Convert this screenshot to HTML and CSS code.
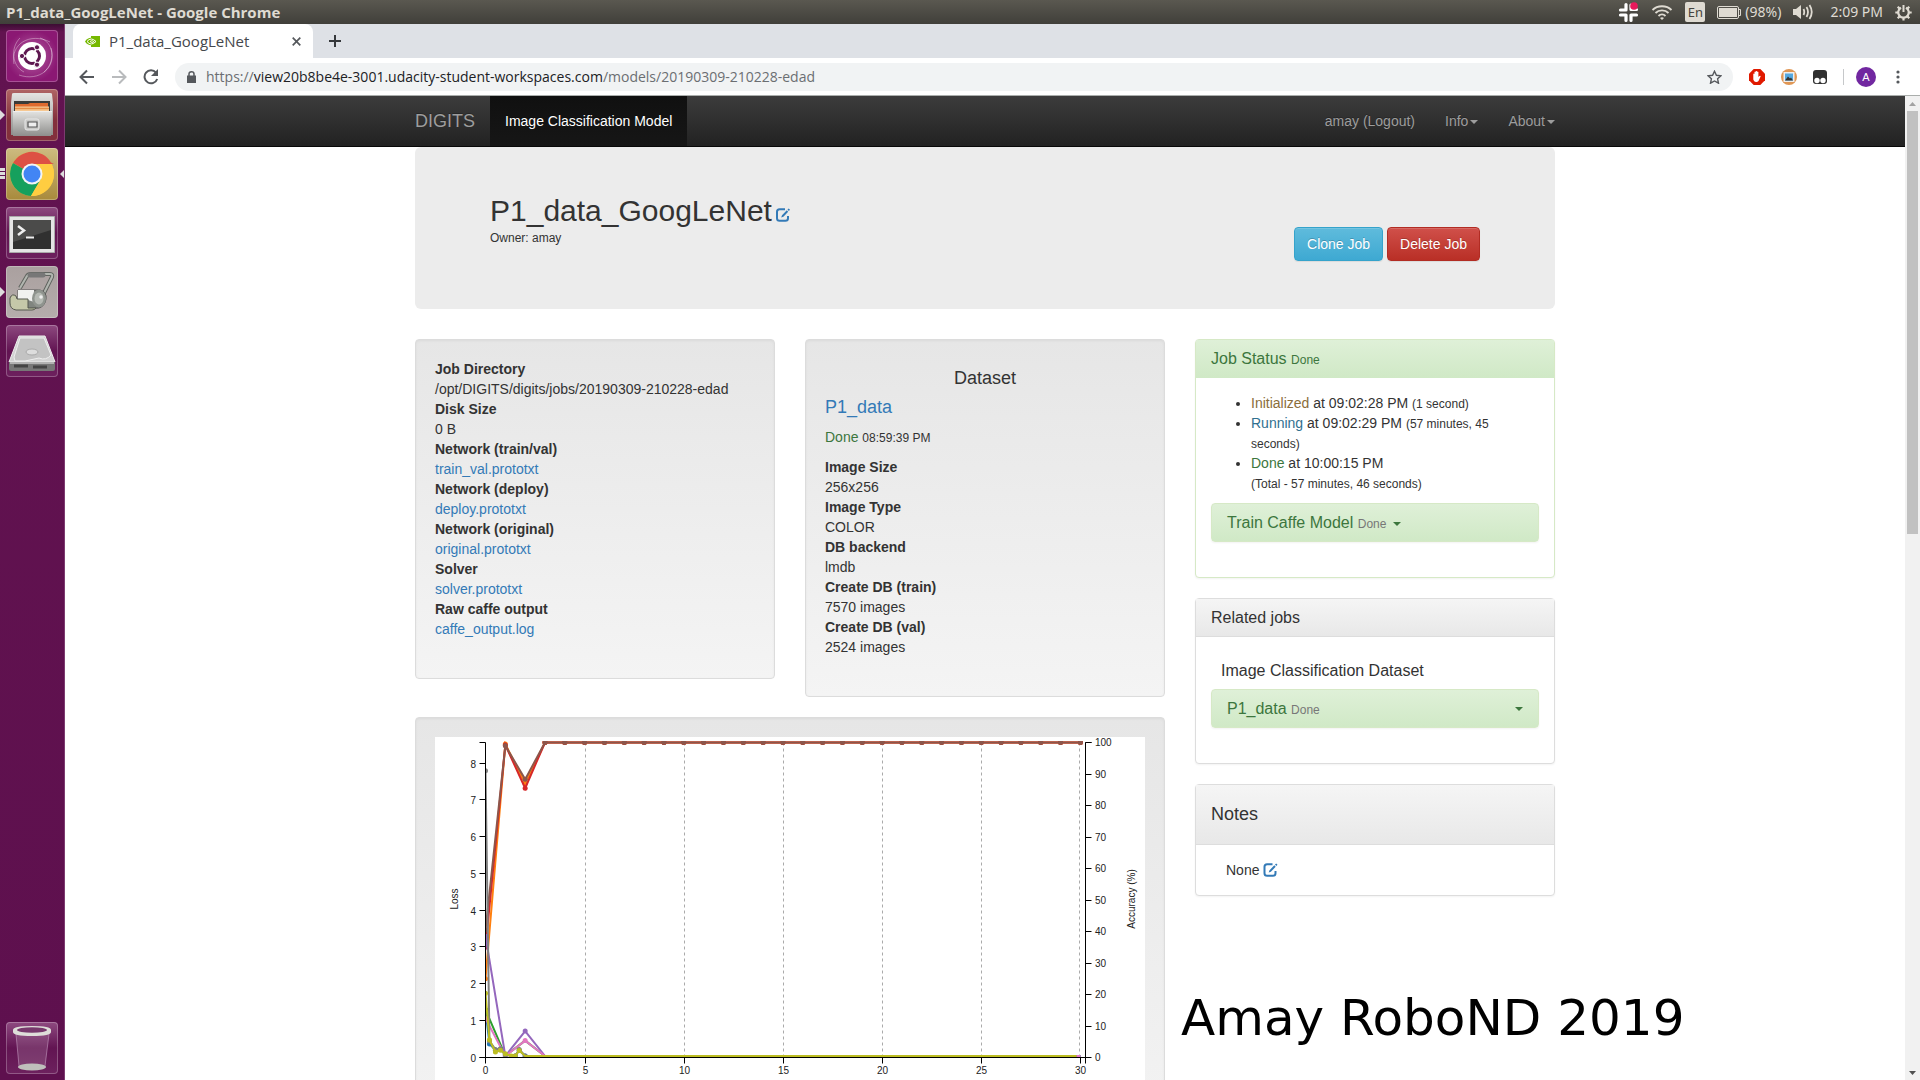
FILE: index.html
```html
<!DOCTYPE html>
<html lang="en">
<head>
<meta charset="utf-8">
<title>P1_data_GoogLeNet</title>
<link rel="stylesheet" href="styles.css">
</head>
<body>
<svg class="defs" width="0" height="0" aria-hidden="true">
  <symbol id="edit" viewBox="0 0 14 14">
    <path d="M9 1.2H3.6C2 1.200 1 2.200 1 3.800v6.400c0 1.600 1 2.600 2.600 2.600h5.800c1.600 0 2.600-1 2.600-2.600V8" fill="none" stroke="currentColor" stroke-width="2"/>
    <path d="M5.200 9.600 6 7.200 10.800 2.300 12.200 3.700 7.400 8.700zM11.500 1.600 12.700.4 14 1.700 12.800 2.900z" fill="currentColor"/>
  </symbol>
</svg>

<header class="menubar">
  <h1 class="window-title">P1_data_GoogLeNet - Google Chrome</h1>
  <div class="indicators">
    <svg width="21" height="21" viewBox="0 0 21 21"><g stroke="#fff" stroke-width="3.200" stroke-linecap="round"><path d="M8 2.500v5M2.500 8H8M13 7.500h5.500M13 7.500V3M2.500 13H8M8 13v5.500M13 18.500V13M13 13h5.500"/></g><path d="M10.500 0v21M0 10.500h21" stroke="#4a4843" stroke-width=".8"/><circle cx="16" cy="4" r="3.800" fill="#e8195b"/></svg>
    <svg width="22" height="16" viewBox="0 0 22 16"><g fill="none" stroke="#dfdbd2" stroke-width="1.800"><path d="M1.500 6c5-5 14-5 19 0M4.500 9c3.500-3.500 9.500-3.500 13 0M7.500 12c2-2 5-2 7 0"/></g><path d="m11 16-2-2q2-1.500 4 0z" fill="#dfdbd2"/></svg>
    <span class="keyboard">En</span>
    <span class="battery"><svg width="24" height="13" viewBox="0 0 24 13"><rect x=".5" y=".5" width="21" height="12" rx="1.500" fill="none" stroke="#dfdbd2"/><path d="M2 2h18v9H2z" fill="#dfdbd2"/><path d="M22 3.500h1.500v6H22" fill="none" stroke="#dfdbd2"/></svg>(98%)</span>
    <svg width="21" height="16" viewBox="0 0 21 16"><path d="M0 5h3l5-4v14l-5-4H0z" fill="#dfdbd2"/><path d="M10.500 5q1.500 3 0 6M13.500 3q3 5 0 10M16.500 1q4.500 7 0 14" fill="none" stroke="#dfdbd2" stroke-width="1.800"/></svg>
    <span class="clock">2:09 PM</span>
    <svg width="17" height="17" viewBox="0 0 17 17"><g fill="none" stroke="#dfdbd2"><path d="M6 3.700a5.300 5.300 0 1 0 5 0" stroke-width="2.200"/><path d="M8.500 1v7" stroke-width="2"/><path d="M.3 8.500h3M13.700 8.500h3M8.500 13.500v3M2.700 2.700l2.200 2.200M14.300 2.700l-2.200 2.200M2.700 14.300l2.200-2.200M14.300 14.300l-2.200-2.200" stroke-width="2.200"/></g></svg>
  </div>
</header>

<div class="desktop">
  <nav class="launcher" aria-label="Launcher">
    <button class="tile tile-dash" aria-label="Search your computer"><svg width="52" height="52" viewBox="0 0 52 52"><g fill="none" stroke="#fff" opacity=".35"><path d="M8 34C4 14 24 2 44 12M45 18c6 20-12 34-32 27M18 42C6 36 4 18 14 8M34 8c14 4 16 24 4 34"/></g><circle cx="26" cy="26" r="14" fill="#fff"/><circle cx="26" cy="26" r="7.500" fill="none" stroke="#5e1750" stroke-width="3"/><path d="M26 26H12M26 26l7-12M26 26l7 12" stroke="#fff" stroke-width="1.500"/><circle cx="26" cy="26" r="5.500" fill="#fff"/><g fill="#5e1750" stroke="#fff"><circle cx="16" cy="26" r="2.600"/><circle cx="31" cy="17.300" r="2.600"/><circle cx="31" cy="34.700" r="2.600"/></g></svg></button>
    <button class="tile tile-files running" aria-label="Files"><svg width="52" height="52" viewBox="0 0 52 52"><defs><linearGradient id="steel" x2="0" y2="1"><stop stop-color="#e4e4e2"/><stop offset="1" stop-color="#8e8e8c"/></linearGradient></defs><path d="M6 5q0-1 2-1h36q2 0 2 1l1 9v32H5V14z" fill="url(#steel)"/><path d="M8 12h36v11H8z" fill="#3b3b38"/><path d="M9 15h13l2-1h18v9H9z" fill="#df6a2e"/><path d="M9 17.500h34V23H9z" fill="#f6c892"/><path d="M9 19.500h34" stroke="#e58c45" stroke-width="1.500"/><path d="M7 22h39l-1 25H7z" fill="url(#steel)"/><path d="M7 22.500h39" stroke="#eee"/><rect x="19" y="30" width="14" height="11" rx="2" fill="#c8c8c6" stroke="#e8e8e8"/><path d="M22 33h9v5h-9z" fill="#eee" stroke="#555" stroke-width="1.200"/></svg></button>
    <button class="tile tile-chrome windows focused" aria-label="Google Chrome"><svg width="52" height="52" viewBox="0 0 52 52"><circle cx="26" cy="26" r="22" fill="#fbcb3b"/><path d="M26 26 7 15a22 22 0 0 1 38-.5L48 16H26z" fill="#dd5144"/><path d="M26 26 7 15a22 22 0 0 0 18 33l10-17z" fill="#16a05d"/><path d="M26 16h19.600A22 22 0 0 1 25 48l10-17z" fill="#ffcd41"/><circle cx="26" cy="26" r="10.500" fill="#f4f4f4"/><circle cx="26" cy="26" r="8.500" fill="#4285f4"/></svg></button>
    <button class="tile" aria-label="Terminal"><svg width="52" height="52" viewBox="0 0 52 52"><path d="M3.500 9.500h45v36h-45z" fill="#e5e5e5" stroke="#aaa"/><path d="M7 13h38v29H7z" fill="#303030"/><path d="M7 13h38v10L7 35z" fill="#4b4b4a"/><path d="m12 19 6 4.500-6 4.500" fill="none" stroke="#eee" stroke-width="2.500"/><path d="M20 30.500h8" stroke="#eee" stroke-width="2"/></svg></button>
    <button class="tile tile-scan running" aria-label="Scanner"><svg width="52" height="52" viewBox="0 0 52 52"><path d="M14 22 21 10q1-2 4-2h19q3 0 2 3L36 31" fill="none" stroke="#60645f" stroke-width="4"/><path d="M14 22 21 10q1-2 4-2h19q3 0 2 3L36 31" fill="none" stroke="#b2b6b0" stroke-width="2"/><path d="M24 9h13" stroke="#777" stroke-width="5" stroke-linecap="round"/><path d="M12 24h22q7 2 6 9t-7 9L12 43z" fill="#80857f" stroke="#555"/><path d="M12 24h16v12l-6-2-10-1z" fill="#f1f2f0"/><ellipse cx="33" cy="32.500" rx="7" ry="9" fill="#8f948e"/><ellipse cx="33" cy="32.500" rx="4.500" ry="6" fill="#b5b9b3"/><circle cx="35" cy="31" r="1.800" fill="#eee"/><path d="M4 32q2-5 6-2l1 3h11v9h8q-1 2-4 2H10q-6-1-6-7z" fill="#c5c8a9" stroke="#55584f"/></svg></button>
    <button class="tile" aria-label="Disk"><svg width="52" height="52" viewBox="0 0 52 52"><path d="M13 11h26l10 26H3z" fill="#d2d2d2" stroke="#eee"/><path d="M3 37h46v7q0 2-2 2H5q-2 0-2-2z" fill="#777"/><path d="M4 38h44" stroke="#eee"/><path d="M14 13h24l7 17q-5 6-12 3l-14 3H9L8 32z" fill="#c3c3c3" stroke="#eee"/><ellipse cx="26" cy="27" rx="6" ry="3" fill="#ddd" stroke="#aaa"/><path d="M8 41h14M27 42h14" stroke="#444" stroke-width="3"/></svg></button>
    <button class="tile tile-trash" aria-label="Trash"><svg width="52" height="52" viewBox="0 0 52 52"><path d="M10 11h33l-4 34q-13 4-26 0z" fill="#fff" opacity=".14"/><path d="m10 12 3 32M43 12l-4 32" stroke="#c49ac0" opacity=".6"/><ellipse cx="26" cy="45" rx="14" ry="3.500" fill="#bfbfbb"/><path d="M7 8q0-4 19-4t19 4v2q0 4-19 4T7 10z" fill="#deded9"/><ellipse cx="26" cy="8" rx="15" ry="2.800" fill="#77386c"/></svg></button>
  </nav>

  <div class="browser">
    <div class="tabstrip" role="tablist">
      <div class="tab" role="tab" aria-selected="true">
        <svg width="15" height="11" viewBox="0 0 15 11"><path d="M6 0h9v11H6z" fill="#76b900"/><path d="M0 5.500C3 .5 9 .5 13 5.500c-4 5-10 5-13 0z" fill="#76b900"/><path d="M2 5.500q4-5 9 0-5 5-9 0z" fill="none" stroke="#fff"/><path d="M5 5.500q2-2 4 .2-2 2-4-.2z" fill="none" stroke="#fff" stroke-width=".8"/></svg>
        <span class="tab-title">P1_data_GoogLeNet</span>
        <button class="bare" aria-label="Close tab"><svg width="9" height="9" viewBox="0 0 9 9"><path d="m.7.7 7.600 7.600m0-7.600L.7 8.300" stroke="#55585c" stroke-width="1.700"/></svg></button>
      </div>
      <button class="bare new-tab" aria-label="New tab"><svg width="12" height="12" viewBox="0 0 12 12"><path d="M6 0v12M0 6h12" stroke="#35383b" stroke-width="2"/></svg></button>
    </div>
    <div class="toolbar">
      <button class="bare" aria-label="Back"><svg width="16" height="16" viewBox="0 0 16 16"><path d="M15 8H2M8 1.500 1.500 8 8 14.500" fill="none" stroke="#55585c" stroke-width="2"/></svg></button>
      <button class="bare" aria-label="Forward"><svg width="16" height="16" viewBox="0 0 16 16"><path d="M1 8h13M8 1.500 14.500 8 8 14.500" fill="none" stroke="#b9bbbd" stroke-width="2"/></svg></button>
      <button class="bare" aria-label="Reload"><svg width="16" height="16" viewBox="0 0 16 16"><path d="M13 3.600A6.500 6.500 0 1 0 14.200 10" fill="none" stroke="#55585c" stroke-width="2"/><path d="M15 0v7H8z" fill="#55585c"/></svg></button>
      <div class="omnibox">
        <svg width="9" height="12" viewBox="0 0 9 12"><path d="M0 4.500h9V12H0z" fill="#55585c"/><path d="M2 5V3q0-2.200 2.500-2.200T7 3v2" fill="none" stroke="#55585c" stroke-width="1.500"/></svg>
        <div class="url" role="textbox" aria-label="Address" contenteditable="true" spellcheck="false">https://<span class="host">view20b8be4e-3001.udacity-student-workspaces.com</span>/models/20190309-210228-edad</div>
        <button class="bare" aria-label="Bookmark"><svg width="15" height="14" viewBox="0 0 15 14"><path d="m7.500 1.200 1.900 4.100 4.500.5-3.300 3 .9 4.400-4-2.200-4 2.200.9-4.400-3.300-3 4.500-.5z" fill="none" stroke="#55585c" stroke-width="1.400"/></svg></button>
      </div>
      <div class="extensions">
        <button class="bare" aria-label="AdBlock"><svg width="16" height="16" viewBox="0 0 16 16"><path d="M4.700 0h6.600L16 4.700v6.600L11.300 16H4.700L0 11.300V4.700z" fill="#e01a00"/><path d="M4.300 8V5q.6-.8 1.200 0V3q.6-.8 1.200 0v-.7q.7-.8 1.400 0V3q.7-.8 1.300 0v5l1-1q1-.6 1.300.2L9.500 12q-1 1.300-2.700 1-2-.2-2.500-2.500z" fill="#fff"/></svg></button>
        <button class="bare" aria-label="Image viewer"><svg width="16" height="16" viewBox="0 0 16 16"><circle cx="8" cy="8" r="8" fill="#e09755"/><path d="M2.500 3h11v10h-11z" fill="#eee"/><path d="M4 4.500h8v7H4z" fill="#55a8e0"/><path d="m4 11.500 3-4 2 2 1-1 2 3z" fill="#333"/></svg></button>
        <button class="bare" aria-label="Tampermonkey"><svg width="14" height="14" viewBox="0 0 14 14"><rect width="14" height="14" rx="3" fill="#303030"/><circle cx="4" cy="10.500" r="2.700" fill="#fff"/><circle cx="10" cy="10.500" r="2.700" fill="#fff"/></svg></button>
      </div>
      <div class="profile">
        <span class="divider"></span>
        <button class="avatar" aria-label="Profile">A</button>
      </div>
      <button class="bare menu" aria-label="Menu"><svg width="4" height="14" viewBox="0 0 4 14"><g fill="#55585c"><circle cx="2" cy="2" r="1.600"/><circle cx="2" cy="7" r="1.600"/><circle cx="2" cy="12" r="1.600"/></g></svg></button>
    </div>

    <div class="viewport">
      <div class="page">
        <nav class="navbar">
          <div class="container navbar-row">
            <a class="brand" href="#">DIGITS</a>
            <a class="nav-link active" href="#">Image Classification Model</a>
            <a class="nav-link push" href="#">amay (Logout)</a>
            <a class="nav-link" href="#">Info<span class="caret"></span></a>
            <a class="nav-link last" href="#">About<span class="caret"></span></a>
          </div>
        </nav>

        <main class="container">
          <section class="jumbotron">
            <div>
              <h2 class="job-name">P1_data_GoogLeNet<a class="edit" href="#" aria-label="Edit name"><svg width="14" height="14"><use href="#edit"/></svg></a></h2>
              <p class="owner">Owner: amay</p>
            </div>
            <div class="job-actions">
              <button class="btn btn-info">Clone Job</button>
              <button class="btn btn-danger">Delete Job</button>
            </div>
          </section>

          <div class="columns">
            <div class="main-column">
              <div class="wells">
                <section class="well">
                  <dl>
                    <dt>Job Directory</dt><dd>/opt/DIGITS/digits/jobs/20190309-210228-edad</dd>
                    <dt>Disk Size</dt><dd>0 B</dd>
                    <dt>Network (train/val)</dt><dd><a href="#">train_val.prototxt</a></dd>
                    <dt>Network (deploy)</dt><dd><a href="#">deploy.prototxt</a></dd>
                    <dt>Network (original)</dt><dd><a href="#">original.prototxt</a></dd>
                    <dt>Solver</dt><dd><a href="#">solver.prototxt</a></dd>
                    <dt>Raw caffe output</dt><dd><a href="#">caffe_output.log</a></dd>
                  </dl>
                </section>
                <section class="well">
                  <h4 class="well-title">Dataset</h4>
                  <h4 class="dataset-link"><a href="#">P1_data</a></h4>
                  <p class="dataset-status"><span class="success">Done</span> <small>08:59:39 PM</small></p>
                  <dl>
                    <dt>Image Size</dt><dd>256x256</dd>
                    <dt>Image Type</dt><dd>COLOR</dd>
                    <dt>DB backend</dt><dd>lmdb</dd>
                    <dt>Create DB (train)</dt><dd>7570 images</dd>
                    <dt>Create DB (val)</dt><dd>2524 images</dd>
                  </dl>
                </section>
              </div>
              <section class="well">
                <svg class="chart" id="chart" height="400" viewBox="0 0 710 400" preserveAspectRatio="xMinYMin meet" role="img" aria-label="Training loss and accuracy by epoch"></svg>
              </section>
            </div>

            <aside class="side-column">
              <section class="panel panel-success">
                <h4 class="panel-heading">Job Status <small>Done</small></h4>
                <div class="panel-body">
                  <ul class="status">
                    <li><span class="warning">Initialized</span> at 09:02:28 PM <small>(1 second)</small></li>
                    <li><span class="info">Running</span> at 09:02:29 PM <small>(57 minutes, 45 seconds)</small></li>
                    <li><span class="success">Done</span> at 10:00:15 PM<br><small>(Total - 57 minutes, 46 seconds)</small></li>
                  </ul>
                  <a class="panel-bar" href="#"><span>Train Caffe Model <small>Done</small> <span class="caret"></span></span></a>
                </div>
              </section>
              <section class="panel">
                <h4 class="panel-heading">Related jobs</h4>
                <div class="panel-body">
                  <h4 class="related-type">Image Classification Dataset</h4>
                  <a class="panel-bar" href="#"><span>P1_data <small>Done</small></span><span class="caret"></span></a>
                </div>
              </section>
              <section class="panel">
                <h4 class="panel-heading panel-heading-tall">Notes</h4>
                <div class="panel-body"><p class="note">None <a class="edit" href="#" aria-label="Edit notes"><svg width="15" height="14"><use href="#edit"/></svg></a></p></div>
              </section>
            </aside>
          </div>
        </main>
      </div>
      <div class="scrollbar" aria-hidden="true">
        <svg width="15" height="15" viewBox="0 0 15 15"><path d="M4 10h7L7.500 6z" fill="#a3a3a3"/></svg>
        <span class="thumb"></span>
        <svg width="15" height="15" viewBox="0 0 15 15"><path d="M4 6h7l-3.500 4z" fill="#505050"/></svg>
      </div>
    </div>
  </div>
</div>
<p class="watermark">Amay RoboND 2019</p>
<script src="chart.js"></script>
</body>
</html>
```
FILE: styles.css
```css
* { box-sizing: border-box; }
body { margin: 0; height: 100vh; display: flex; flex-direction: column; overflow: hidden; position: relative; font: 14px/20px "Liberation Sans", Arial, sans-serif; color: #333; background: #fff; }
h1, h2, h4, p, dl, dd, ul { margin: 0; font-weight: normal; }
a { color: #337ab7; text-decoration: none; }
button { font: inherit; cursor: pointer; }
svg { display: block; flex: none; }
small { font-size: 12px; line-height: 14px; }
.defs { position: absolute; }
.bare { border: 0; padding: 0; background: none; }

.menubar { flex: none; height: 24px; display: flex; align-items: center; justify-content: space-between; padding: 0 8px 0 6px; background: linear-gradient(#5a5850, #403f3a); color: #dfdbd2; font: 14px/24px "Noto Sans", sans-serif; }
.window-title { font: bold 15px/24px "Open Sans", sans-serif; }
.indicators { display: flex; align-items: center; gap: 12px; }
.keyboard { width: 20px; height: 20px; border-radius: 2px; background: #dfdbd2; color: #45433e; font-size: 13px; line-height: 20px; text-align: center; }
.battery { display: flex; align-items: center; gap: 4px; }
.clock { margin-left: 4px; }

.desktop { flex: 1; min-height: 0; display: flex; }
.launcher { flex: none; width: 65px; display: flex; flex-direction: column; gap: 7px; padding: 6px 7px 6px 6px; background: linear-gradient(#3c0d33, #621350 8px, #5e104e); border-right: 1px solid #7d3b70; }
.tile { position: relative; flex: none; width: 52px; height: 52px; padding: 0; border: 0; border-radius: 4px; background: linear-gradient(#8e4a80, #621452 50%, #6d215e); box-shadow: inset 0 0 0 1px rgba(255,255,255,.25); }
.tile-dash { background: radial-gradient(#b560a4, #8b1873 70%); }
.tile-files { background: linear-gradient(#b06565, #83303c 60%); }
.tile-chrome { background: linear-gradient(#cdbb80, #a88a3c); }
.tile-scan { background: linear-gradient(#aaa09f, #b5adac); }
.tile-trash { margin-top: auto; }
.running::before { content: ""; position: absolute; left: -6px; top: 21px; border: 5px solid transparent; border-left-color: #ddd; border-right: 0; }
.windows::before { content: ""; position: absolute; left: -6px; top: 20px; width: 5px; height: 11px; background: repeating-linear-gradient(#ddd 0 3px, transparent 3px 4px); }
.focused::after { content: ""; position: absolute; right: -6px; top: 22px; border: 4px solid transparent; border-right-color: #ddd; border-left: 0; }

.browser { flex: 1; min-width: 0; display: flex; flex-direction: column; }
.tabstrip { flex: none; height: 34px; display: flex; padding-left: 8px; background: #dee1e6; }
.tab { width: 240px; display: flex; align-items: center; gap: 9px; padding: 0 8px 0 12px; border-radius: 8px 8px 0 0; background: #fff; color: #45484c; font: 15px/34px "Open Sans", sans-serif; }
.tab-title { flex: 1; }
.tab .bare { padding: 4px; }
.new-tab { padding: 0 16px; }
.toolbar { flex: none; height: 38px; display: flex; align-items: center; padding: 0 20px 0 14px; gap: 16px; border-bottom: 1px solid #aaaeac; background: #fff; }
.omnibox { flex: 1; height: 28px; display: flex; align-items: center; gap: 10px; padding: 0 11px 0 12px; border-radius: 14px; background: #f1f3f4; }
.url { flex: 1; color: #6b6e72; font: 14px/28px "Open Sans", sans-serif; white-space: nowrap; }
.host { color: #202124; }
.extensions { display: flex; align-items: center; gap: 16px; }
.profile { display: flex; align-items: center; gap: 12px; }
.divider { width: 1px; height: 16px; background: #c6c8ca; }
.avatar { width: 20px; height: 20px; padding: 0; border: 0; border-radius: 50%; background: #7127a0; color: #fff; font-size: 11px; line-height: 20px; }
.menu { margin-left: 4px; }

.viewport { flex: 1; min-height: 0; display: flex; }
.page { flex: 1; min-width: 0; overflow: hidden; }
.scrollbar { flex: none; width: 15px; display: flex; flex-direction: column; background: #f1f1f1; }
.thumb { height: 43%; width: 11px; margin: 0 2px auto; background: #c1c1c1; }

.container { width: 100%; max-width: 1170px; margin: 0 auto; }
.container { max-width: 1200px; padding: 0 30px; }
.navbar { background: linear-gradient(#3c3c3c, #222); border-bottom: 1px solid #080808; }
.navbar-row { display: flex; line-height: 20px; text-shadow: 0 -1px 0 rgba(0,0,0,.25); }
.brand { padding: 15px 15px 15px 0; font-size: 18px; color: #9d9d9d; }
.nav-link { padding: 15px; color: #9d9d9d; }
.nav-link.active { color: #fff; background: linear-gradient(#101010, #161616); }
.push { margin-left: auto; }
.last { padding-right: 0; }
.caret { display: inline-block; vertical-align: middle; margin-left: 2px; border: 4px solid transparent; border-top-color: currentColor; border-bottom: 0; }

.jumbotron { display: flex; justify-content: space-between; align-items: flex-start; min-height: 162px; padding: 47px 75px 48px; margin-bottom: 30px; border-radius: 6px; background: #ececec; }
.job-name { font-size: 30px; line-height: 34px; }
.edit { display: inline-block; margin-left: 4px; }
.job-name .edit { vertical-align: -1px; }
.owner { font-size: 12px; line-height: 20px; }
.job-actions { display: flex; gap: 4px; padding-top: 33px; }
.btn { height: 34px; padding: 0 12px; border: 1px solid; border-radius: 4px; color: #fff; text-shadow: 0 -1px 0 rgba(0,0,0,.2); box-shadow: inset 0 1px 0 rgba(255,255,255,.15), 0 1px 1px rgba(0,0,0,.075); }
.btn-info { background: linear-gradient(#5fbbdc, #3ea9d2); border-color: #35a3cb; }
.btn-danger { background: linear-gradient(#d0504a, #b92f26); border-color: #b22c23; }

.columns { display: grid; grid-template-columns: 750fr 360fr; gap: 30px; align-items: start; }
.wells { display: grid; grid-template-columns: 1fr 1fr; gap: 30px; align-items: start; margin-bottom: 20px; }
.well { padding: 19px; border: 1px solid #dcdcdc; border-radius: 4px; background: linear-gradient(#e6e6e6, #f4f4f4); box-shadow: inset 0 1px 3px rgba(0,0,0,.05), 0 1px 0 rgba(255,255,255,.1); }
.well dl { margin-bottom: 20px; }
dt { font-weight: bold; }
.well-title { margin: 9px 0; font-size: 18px; line-height: 20px; text-align: center; }
.dataset-link { margin-bottom: 10px; font-size: 18px; line-height: 20px; }
.dataset-status { margin-bottom: 10px; }
.success { color: #3c763d; }
.warning { color: #8a6d3b; }
.info { color: #31708f; }

.panel { margin-bottom: 20px; border: 1px solid #ddd; border-radius: 4px; background: #fff; box-shadow: 0 1px 2px rgba(0,0,0,.05); }
.panel-heading { padding: 10px 15px; border-bottom: 1px solid #ddd; font-size: 16px; line-height: 17px; background: linear-gradient(#f5f5f5, #e8e8e8); }
.panel-heading-tall { padding: 20px 15px; font-size: 18px; line-height: 19px; }
.panel-body { padding: 15px; }
.panel-success { border-color: #d6e9c6; }
.panel-success .panel-heading { color: #3c763d; border-color: #d0e9c6; background: linear-gradient(#dff0d8, #d0e9c6); }
.status { padding-left: 40px; margin-bottom: 10px; }
.panel-bar { display: flex; align-items: center; justify-content: space-between; margin-bottom: 20px; padding: 10px 15px; border: 1px solid #d6e9c6; border-radius: 4px; background: linear-gradient(#dff0d8, #d0e9c6); color: #3c763d; font-size: 16px; line-height: 17px; box-shadow: 0 1px 2px rgba(0,0,0,.05); }
.panel-bar small { color: #777; }
.related-type { margin: 10px 10px; font-size: 16px; line-height: 17px; }
.note { padding-left: 15px; }
.note .edit { margin-left: 0; vertical-align: -2px; }

.chart { width: 100%; background: #fff; font-size: 10px; }
.chart text { fill: #222; }
.chart .axis { fill: none; stroke: #000; }
.chart .grid { stroke: #aaa; stroke-dasharray: 3 3; }
.chart .series { fill: none; stroke-width: 2; }

.watermark { position: absolute; left: 1181px; bottom: 30px; color: #000; font: 50px/64px "DejaVu Sans", sans-serif; white-space: nowrap; }
```
FILE: chart.js
```js
const chart = document.getElementById('chart');
const NS = 'http://www.w3.org/2000/svg';
const LEFT = 50.5, RIGHT = 650.5, TOP = 5.5, BOTTOM = 320.5;
const x = epoch => LEFT + epoch * 19.83;
const loss = v => BOTTOM - v * 36.75;
const acc = v => BOTTOM - v * 3.15;

function add(name, attrs, text) {
  const el = document.createElementNS(NS, name);
  for (const key in attrs) el.setAttribute(key, attrs[key]);
  if (text !== undefined) el.textContent = text;
  chart.appendChild(el);
}

for (let e = 5; e <= 30; e += 5) {
  const gx = Math.round(x(e)) + 0.5 - (e === 30 ? 1 : 0);
  add('path', { class: 'grid', d: `M${gx} ${TOP}V${BOTTOM}` });
}

const flat = (value, from) => {
  const points = [];
  for (let e = from; e <= 30; e++) points.push([e, value]);
  return points;
};
const series = [
  { color: '#1f77b4', y: loss, dots: 8, points: [[0, 1.3], [0.2, 0.37], [0.5, 0.2], [0.75, 0.22], [1, 0.08], [1.5, 0.04], [1.7, 0.2], [2, 0.04], ...flat(0.04, 3)] },
  { color: '#ff7f0e', y: acc, points: [[0, 25], [1, 99.5], [2, 87], ...flat(100, 3)] },
  { color: '#2ca02c', y: loss, dots: 1, points: [[0, 1.3], [1, 0.05], [2, 0.46], [3, 0.04], [30, 0.04]] },
  { color: '#d62728', y: acc, points: [[0, 35], [1, 99.2], [2, 85.5], ...flat(100, 3)] },
  { color: '#9467bd', y: loss, dots: 3, points: [[0, 3.3], [1, 0.04], [2, 0.72], ...flat(0.04, 3)] },
  { color: '#8c564b', y: acc, points: [[0, 40.5], [1, 99], [2, 88.3], ...flat(100, 3)] },
  { color: '#e377c2', y: loss, dots: 3, points: [[0, 1.06], [1, 0.04], [2, 0.46], ...flat(0.04, 3)] },
  { color: '#7f7f7f', y: loss, dots: 8, points: [[0, 7.8], [0.2, 0.45], [0.5, 0.22], [0.75, 0.24], [1, 0.07], [1.5, 0.04], [1.7, 0.22], [2, 0.04], [29.8, 0.04]] },
  { color: '#bcbd22', y: loss, dots: 8, points: [[0, 1.75], [0.2, 0.48], [0.5, 0.15], [0.75, 0.2], [1, 0.1], [1.3, 0.04], [1.5, 0.04], [1.7, 0.19], [2, 0.04], [29.8, 0.04]] }
];

chart.insertAdjacentHTML('beforeend', `<clipPath id="plot"><rect x="${LEFT}" y="4" width="${RIGHT - LEFT - 2}" height="317"/></clipPath>`);
for (const s of series) {
  const xy = s.points.map(([e, v]) => [x(e), s.y(v)]);
  add('polyline', { class: 'series', 'clip-path': 'url(#plot)', stroke: s.color, points: xy.join(' ') });
  for (const [cx, cy] of xy.slice(0, s.dots)) add('circle', { cx, cy, r: 2.5, fill: s.color, 'clip-path': 'url(#plot)' });
}

add('path', { class: 'axis', d: `M44.5 ${TOP}H${LEFT}V${BOTTOM}H44.5M${LEFT} ${BOTTOM}H${RIGHT}` });
add('path', { class: 'axis', d: `M656.5 ${TOP}H${RIGHT}V326.5` });
for (let v = 0; v <= 8; v++) {
  const y = Math.round(loss(v)) - 0.5;
  add('path', { class: 'axis', d: `M44.500 ${y}H${LEFT}` });
  add('text', { x: 41, y: y + 4, 'text-anchor': 'end' }, v);
}
for (let v = 0; v <= 100; v += 10) {
  const y = Math.floor(acc(v)) + 0.5;
  add('path', { class: 'axis', d: `M${RIGHT} ${y}H656.5` });
  add('text', { x: 660, y: y + 3 }, v);
}
for (let e = 0; e <= 30; e += 5) {
  const tx = e === 0 ? LEFT : e === 30 ? 645.5 : Math.round(x(e)) + 0.5;
  add('path', { class: 'axis', d: `M${tx} ${BOTTOM}V326.5` });
  add('text', { x: tx, y: 337, 'text-anchor': 'middle' }, e);
}
add('text', { transform: 'translate(23 162) rotate(-90)', 'text-anchor': 'middle' }, 'Loss');
add('text', { transform: 'translate(700 162) rotate(-90)', 'text-anchor': 'middle' }, 'Accuracy (%)');
```
